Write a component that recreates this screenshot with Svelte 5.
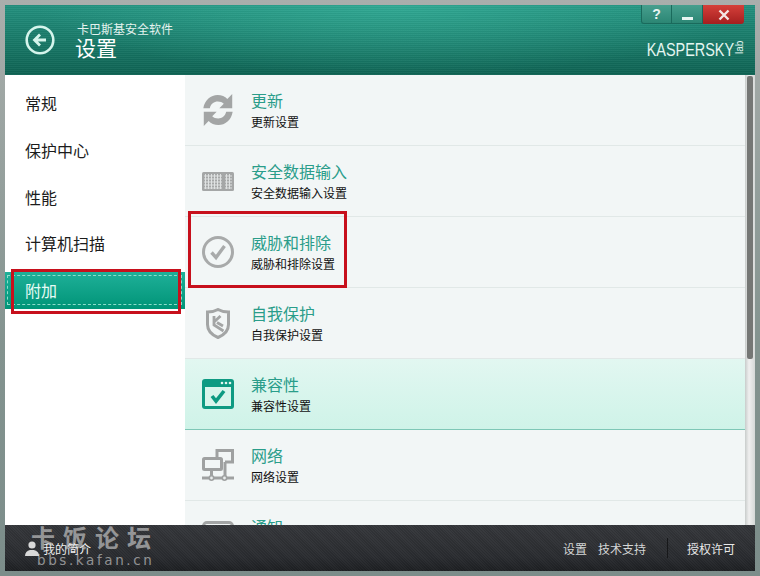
<script>
  const sections = ['常规', '保护中心', '性能', '计算机扫描', '附加'];

  const rows = [
    { icon: 'update', title: '更新', sub: '更新设置' },
    { icon: 'keyboard', title: '安全数据输入', sub: '安全数据输入设置' },
    { icon: 'threat', title: '威胁和排除', sub: '威胁和排除设置' },
    { icon: 'shield', title: '自我保护', sub: '自我保护设置' },
    { icon: 'compat', title: '兼容性', sub: '兼容性设置', active: true },
    { icon: 'network', title: '网络', sub: '网络设置' },
    { icon: 'notify', title: '通知' }
  ];
</script>

<div class="window">
  <header class="head">
    <svg class="back" width="30" height="30" viewBox="0 0 30 30">
      <circle cx="15" cy="15" r="13.3" fill="none" stroke="#d5f5ec" stroke-width="2.6" />
      <path d="M9 15h12M15 9.500L9.500 15l5.500 5.500" fill="none" stroke="#d5f5ec" stroke-width="2.8" />
    </svg>
    <div class="head-text">
      <div class="product">卡巴斯基安全软件</div>
      <div class="page-title">设置</div>
    </div>
    <div class="head-right">
      <div class="win-btns">
        <div class="win-btn help">?</div>
        <div class="win-btn min"><span></span></div>
        <div class="win-btn close">
          <svg width="12" height="12" viewBox="0 0 12 12"><path d="M1.500 1.500l9 9M10.500 1.500l-9 9" stroke="#f4e6e4" stroke-width="2.4" /></svg>
        </div>
      </div>
      <div class="logo"><span class="word">KASPERSKY</span><span class="lab">lab</span></div>
    </div>
  </header>

  <div class="body">
    <nav class="side">
      {#each sections as s, i}
        <div class="side-item" class:current={i === 4}>{s}</div>
      {/each}
    </nav>

    <div class="content">
      <div class="list">
        {#each rows as r}
          <div class="row" class:active={r.active}>
            <div class="icon">
              {#if r.icon === 'update'}
                <svg width="32" height="32" viewBox="0 0 36 36" fill="#a3a5a5">
                  <path d="M1.500 16C3 6.500 10 1 17.500 1c4.500 0 8.500 1.800 11 4.500L34 0v16H19.500l5-5C22.800 9.300 20.400 8.500 17.800 8.500 13.500 8.500 10 11 8.800 16z" />
                  <path d="M34.500 20C33 29.500 26 35 18.500 35c-4.500 0-8.500-1.800-11-4.500L2 36V20h14.500l-5 5c1.700 1.700 4.100 2.500 6.700 2.500 4.300 0 7.800-2.500 9-7.500z" />
                </svg>
              {:else if r.icon === 'keyboard'}
                <svg width="32" height="19" viewBox="0 0 32 19">
                  <rect width="32" height="19" rx="1.500" fill="#a5a7a7" />
                  <path d="M2 4h18M2 7h18M2 10h18M2 13h18M2 16h18M23 4h7M23 7h7M23 10h7M23 13h7M23 16h7M3.500 2v15M6.500 2v15M9.500 2v15M12.500 2v15M15.500 2v15M18.500 2v15M24.500 2v15M27.500 2v15" stroke="#dfe2e2" stroke-width="1" />
                </svg>
              {:else if r.icon === 'threat'}
                <svg width="32" height="32" viewBox="0 0 32 32">
                  <circle cx="16" cy="16" r="14.500" fill="none" stroke="#a8aaaa" stroke-width="3" />
                  <path d="M9.500 16.500l4.500 5L22.500 10" fill="none" stroke="#a8aaaa" stroke-width="3.400" />
                </svg>
              {:else if r.icon === 'shield'}
                <svg width="24" height="31" viewBox="0 0 24 31">
                  <path d="M12 1.500C9 3.200 5.500 4 1.500 4v12.500c0 6 4.500 10.500 10.500 13 6-2.500 10.500-7 10.500-13V4c-4 0-7.500-.8-10.500-2.500z" fill="none" stroke="#a3a5a5" stroke-width="3" />
                  <path d="M8 8v9l9.500 6M8 14l6.500-6M11 14.500l6 3.500" fill="none" stroke="#a3a5a5" stroke-width="2.800" />
                </svg>
              {:else if r.icon === 'compat'}
                <svg width="32" height="30" viewBox="0 0 32 30">
                  <rect width="32" height="30" rx="3" fill="#0e9a82" />
                  <rect x="3" y="8" width="26" height="19" fill="#d9f5ec" />
                  <circle cx="20" cy="4" r="1.300" fill="#e3f7f1" /><circle cx="24" cy="4" r="1.300" fill="#e3f7f1" /><circle cx="28" cy="4" r="1.300" fill="#e3f7f1" />
                  <path d="M10 17l4 5 8-10" fill="none" stroke="#0e9a82" stroke-width="3.600" />
                </svg>
              {:else if r.icon === 'network'}
                <svg width="32" height="32" viewBox="0 0 32 32" fill="none" stroke="#9fa1a1" stroke-width="3">
                  <rect x="1.500" y="9.500" width="18" height="11" rx="1" />
                  <path d="M15 9V1.500h15.500V13H23M23 13v16M9.500 21v8M0 29h32" />
                  <circle cx="9.500" cy="29" r="2.200" fill="#e9eded" stroke-width="1.600" />
                  <circle cx="22.500" cy="29" r="2.200" fill="#e9eded" stroke-width="1.600" />
                </svg>
              {:else}
                <svg width="32" height="30" viewBox="0 0 32 30">
                  <rect x="1.500" y="1.500" width="29" height="27" rx="3.500" fill="none" stroke="#a3a5a5" stroke-width="3" />
                </svg>
              {/if}
            </div>
            <div>
              <div class="row-title">{r.title}</div>
              {#if r.sub}
                <div class="row-sub">{r.sub}</div>
              {/if}
            </div>
          </div>
        {/each}
      </div>
      <div class="scroll"><div class="thumb"></div></div>
    </div>
  </div>

  <footer class="foot">
    <svg width="14" height="15" viewBox="0 0 14 15" fill="#d9d9d9">
      <circle cx="7" cy="4" r="3.600" />
      <path d="M0 15c0-3.500 2-5 5-6h4c3 1 5 2.500 5 6z" />
    </svg>
    <span class="me">我的简介</span>
    <span class="links">设置</span>
    <span class="links">技术支持</span>
    <span class="divider"></span>
    <span class="links license">授权许可</span>
  </footer>

  <!-- red annotation boxes and forum watermark sit on top of the window -->
  <div class="mark mark-side"></div>
  <div class="mark mark-row"></div>
  <div class="watermark">
    <div class="wm-cn">卡饭论坛</div>
    <div class="wm-en">bbs.kafan.cn</div>
  </div>
</div>

<style>
  :global(body) {
    margin: 0;
    background: #8d9b99;
  }

  .window {
    position: relative;
    box-sizing: border-box;
    width: 760px;
    height: 576px;
    padding: 5px;
    display: flex;
    flex-direction: column;
    overflow: hidden;
    background: linear-gradient(#a9aeac, #83938f 60%, #7c8d8a);
    font-family: "Noto Sans CJK SC", "Liberation Sans", sans-serif;
  }

  .head {
    flex: 0 0 70px;
    display: flex;
    color: #fff;
    background:
      repeating-linear-gradient(0deg, rgba(255, 255, 255, 0.035) 0 1px, rgba(0, 0, 0, 0.035) 1px 2px),
      radial-gradient(ellipse 360px 70px at 390px 0, rgba(60, 190, 165, 0.55), rgba(60, 190, 165, 0)),
      linear-gradient(#23917f, #0f6353);
  }

  .back {
    margin: 20px 0 0 20px;
  }

  .head-text {
    margin-left: 20px;
    padding-top: 16px;
  }

  .product {
    margin-left: 2px;
    font-size: 12px;
    line-height: 15px;
    color: #e4f3ef;
  }

  .page-title {
    font-size: 21px;
    line-height: 23px;
  }

  .head-right {
    margin-left: auto;
    width: 118px;
    display: flex;
    flex-direction: column;
    align-items: flex-end;
    padding-right: 11px;
  }

  .win-btns {
    display: flex;
    height: 19px;
  }

  .win-btn {
    display: flex;
    align-items: center;
    justify-content: center;
    box-sizing: border-box;
    height: 19px;
    border: 1px solid #1a6a5c;
    border-top: 0;
    border-left: 0;
    background: linear-gradient(#479f8e, #2c8674);
    color: #e8f5f2;
    font: bold 14px "Liberation Sans", sans-serif;
  }

  .help {
    width: 31px;
    border-left: 1px solid #1a6a5c;
    border-radius: 0 0 0 3px;
  }

  .min {
    width: 31px;
    align-items: flex-end;
    padding-bottom: 3px;
  }

  .min span {
    width: 11px;
    height: 3px;
    background: #e8f5f2;
  }

  .close {
    width: 41px;
    border: 0;
    border-radius: 0 0 3px 0;
    background: linear-gradient(#d5403a, #a51f1f);
  }

  .logo {
    display: flex;
    align-items: center;
    gap: 1px;
    width: 97px;
    justify-content: flex-end;
    margin-top: 15px;
    color: #e4f6f1;
    font: 19px/22px "Liberation Sans", sans-serif;
  }

  .word {
    font-size: 19px;
    transform: scaleX(0.76);
    transform-origin: right center;
    margin-right: 1px;
    white-space: nowrap;
  }

  .lab {
    width: 8px;
    font-size: 10px;
    line-height: 12px;
    text-align: center;
    transform: rotate(-90deg);
  }

  .body {
    flex: 1;
    min-height: 0;
    display: flex;
  }

  .side {
    flex: 0 0 180px;
    box-sizing: border-box;
    padding-top: 10px;
    background: #fff;
  }

  .side-item {
    position: relative;
    box-sizing: border-box;
    height: 37px;
    margin-bottom: 9.75px;
    padding-left: 20px;
    font-size: 16px;
    line-height: 37px;
    color: #1c1c1c;
  }

  .side-item.current {
    margin-top: 1px;
    color: #e6fbf5;
    background: linear-gradient(#1fb099, #009477);
  }

  .side-item.current::after {
    content: "";
    position: absolute;
    inset: 3px 3px 4px 2px;
    border: 1px dashed #8fdccb;
  }

  .content {
    flex: 1;
    min-width: 0;
    display: flex;
    background: #f2f6f6;
  }

  .list {
    flex: 1;
    min-width: 0;
    overflow: hidden;
  }

  .row {
    display: flex;
    box-sizing: border-box;
    height: 71px;
    padding-left: 8px;
    border-bottom: 1px solid #e1e8e7;
  }

  .row.active {
    background: linear-gradient(#e2f7f1, #cff3e8);
    border-bottom-color: #7ec7b6;
  }

  .icon {
    flex: 0 0 50px;
    display: flex;
    align-items: center;
    justify-content: center;
    height: 70px;
    margin-right: 8px;
  }

  .row-title {
    margin-top: 15px;
    font-size: 16px;
    line-height: 21px;
    color: #2a9d8a;
  }

  .row-sub {
    margin-top: 2px;
    font-size: 12px;
    line-height: 18px;
    color: #111;
  }

  .scroll {
    flex: 0 0 10px;
    background: linear-gradient(90deg, #c8cccb, #efefef 40%, #d5d8d7);
  }

  .thumb {
    width: 6px;
    height: 283px;
    margin: 1px 0 0 2px;
    border-radius: 2px;
    background: #757775;
  }

  .foot {
    flex: 0 0 46px;
    display: flex;
    align-items: center;
    box-sizing: border-box;
    padding: 0 20px;
    color: #d4d6d6;
    font-size: 12px;
    background:
      repeating-linear-gradient(45deg, rgba(255, 255, 255, 0.025) 0 1px, rgba(0, 0, 0, 0.05) 1px 2px),
      linear-gradient(#35373b, #2a2c30 70%, #1e2023);
  }

  .me {
    margin-left: 4px;
    color: #f0f0f0;
  }

  .links {
    margin-left: 10px;
  }

  .links:nth-of-type(2) {
    margin-left: auto;
    margin-right: 1px;
  }

  .divider {
    width: 1px;
    height: 20px;
    margin-left: 21px;
    background: #17181a;
  }

  .license {
    margin-left: 19px;
    color: #e8e8e8;
  }

  .mark {
    position: absolute;
    box-sizing: border-box;
    border: 3px solid #c7101c;
  }

  .mark-side {
    left: 11px;
    top: 269px;
    width: 170px;
    height: 45px;
  }

  .mark-row {
    left: 188px;
    top: 211px;
    width: 159px;
    height: 77px;
  }

  .watermark {
    position: absolute;
    left: 31px;
    top: 522px;
    color: rgba(225, 225, 225, 0.58);
    pointer-events: none;
  }

  .wm-cn {
    font-size: 24px;
    line-height: 30px;
    letter-spacing: 8px;
    font-weight: 700;
  }

  .wm-en {
    margin-left: 6px;
    font: 13.500px/16px "DejaVu Sans", sans-serif;
    letter-spacing: 2.600px;
  }
</style>
